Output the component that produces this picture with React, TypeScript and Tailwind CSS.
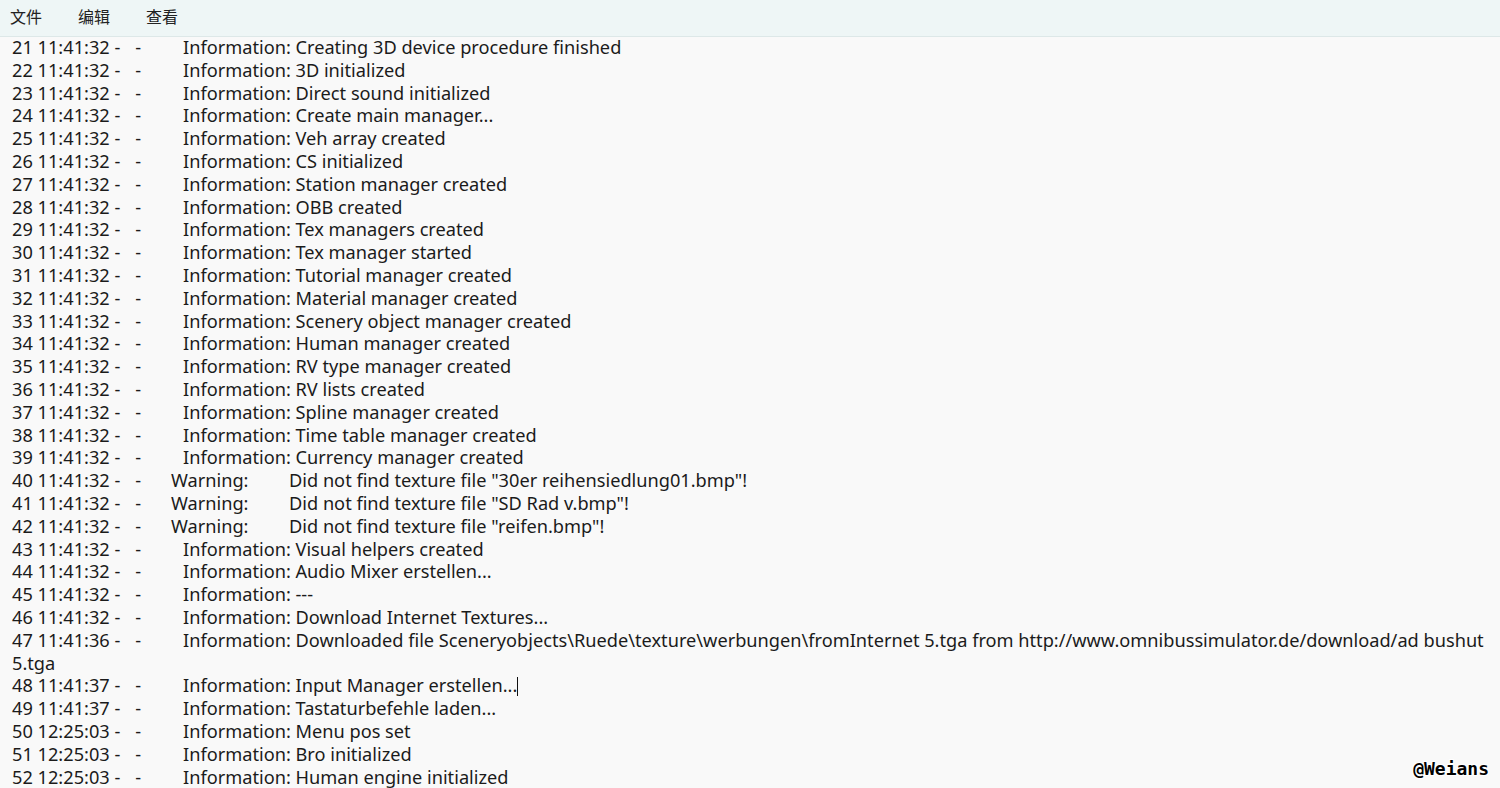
import React from "react";

type LogLine = { n: number; time: string; kind: "info" | "warn"; msg: string; tail?: string };

const rows: [number, string, string][] = [
  [21, "11:41:32", "Creating 3D device procedure finished"],
  [22, "11:41:32", "3D initialized"],
  [23, "11:41:32", "Direct sound initialized"],
  [24, "11:41:32", "Create main manager..."],
  [25, "11:41:32", "Veh array created"],
  [26, "11:41:32", "CS initialized"],
  [27, "11:41:32", "Station manager created"],
  [28, "11:41:32", "OBB created"],
  [29, "11:41:32", "Tex managers created"],
  [30, "11:41:32", "Tex manager started"],
  [31, "11:41:32", "Tutorial manager created"],
  [32, "11:41:32", "Material manager created"],
  [33, "11:41:32", "Scenery object manager created"],
  [34, "11:41:32", "Human manager created"],
  [35, "11:41:32", "RV type manager created"],
  [36, "11:41:32", "RV lists created"],
  [37, "11:41:32", "Spline manager created"],
  [38, "11:41:32", "Time table manager created"],
  [39, "11:41:32", "Currency manager created"],
];

const lines: LogLine[] = [
  ...rows.map(([n, time, msg]) => ({ n, time, kind: "info" as const, msg })),
  { n: 40, time: "11:41:32", kind: "warn", msg: 'Did not find texture file "30er_reihensiedlung01.bmp"!' },
  { n: 41, time: "11:41:32", kind: "warn", msg: 'Did not find texture file "SD_Rad_v.bmp"!' },
  { n: 42, time: "11:41:32", kind: "warn", msg: 'Did not find texture file "reifen.bmp"!' },
  { n: 43, time: "11:41:32", kind: "info", msg: "Visual helpers created" },
  { n: 44, time: "11:41:32", kind: "info", msg: "Audio Mixer erstellen..." },
  { n: 45, time: "11:41:32", kind: "info", msg: "---" },
  { n: 46, time: "11:41:32", kind: "info", msg: "Download Internet Textures..." },
  {
    n: 47,
    time: "11:41:36",
    kind: "info",
    msg: "Downloaded file Sceneryobjects\\Ruede\\texture\\werbungen\\fromInternet_5.tga from http://www.omnibussimulator.de/download/ad_bushut",
    tail: "_5.tga",
  },
  { n: 48, time: "11:41:37", kind: "info", msg: "Input Manager erstellen..." },
  { n: 49, time: "11:41:37", kind: "info", msg: "Tastaturbefehle laden..." },
  { n: 50, time: "12:25:03", kind: "info", msg: "Menu pos set" },
  { n: 51, time: "12:25:03", kind: "info", msg: "Bro initialized" },
  { n: 52, time: "12:25:03", kind: "info", msg: "Human engine initialized" },
];

// underscores in the file show up as blanks in the editor (underline clipped by the line box)
const show = (s: string) => s.replace(/_/g, " ");

const Line = ({ line }: { line: LogLine }) => (
  <div className="leading-[22.8px]">
    <div className="whitespace-nowrap">
      {line.kind === "info" ? (
        <>
          <span className="inline-block w-[171px]">
            {line.n} {line.time} -<span className="inline-block w-[15px]" />-
          </span>
          <span>Information: {show(line.msg)}</span>
        </>
      ) : (
        <>
          <span className="inline-block w-[159px]">
            {line.n} {line.time} -<span className="inline-block w-[15px]" />-
          </span>
          <span className="inline-block w-[118px]">Warning:</span>
          <span>{show(line.msg)}</span>
        </>
      )}
      {line.n === 48 && <span className="inline-block w-px h-[19px] bg-[#111] align-[-4px]" />}
    </div>
    {line.tail && <div>{show(line.tail).trim()}</div>}
  </div>
);

export default function App() {
  return (
    <div className="w-[1500px] h-[788px] overflow-hidden bg-[#f9f9f9] text-[#1b1b1b] relative font-['Noto_Sans','Noto_Sans_CJK_SC',sans-serif]">
      <div className="h-[37px] bg-[#eef6f6] border-b border-[#dde8e8] flex items-center gap-[36px] pl-[10px] pb-[2px] text-[16px] text-[#222]">
        <span>文件</span>
        <span>编辑</span>
        <span>查看</span>
      </div>
      <div className="pl-[12px] text-[18.2px] -mt-[1px]">
        {lines.map((l) => (
          <Line key={l.n} line={l} />
        ))}
      </div>
      <div className="absolute right-[11px] bottom-[9px] font-['DejaVu_Sans_Mono',monospace] font-bold text-[18px] leading-[20px] text-black [text-shadow:1px_1px_0_#fff,-1px_-1px_0_#fff,1px_-1px_0_#fff,-1px_1px_0_#fff]">
        @Weians
      </div>
    </div>
  );
}
